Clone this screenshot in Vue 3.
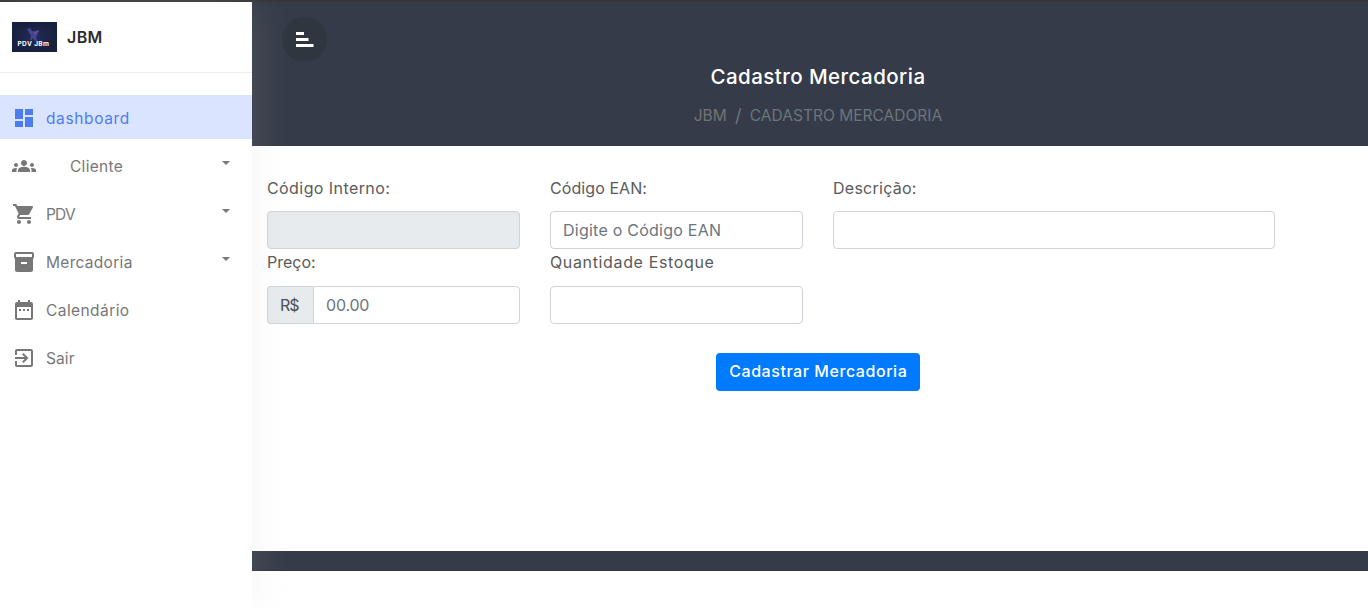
<script setup>
const menu = [
  { label: 'dashboard', cls: 'w-dashboard', active: true, icon: 'M3 13h8V3H3v10zm0 8h8v-6H3v6zm10 0h8V11h-8v10zm0-18v6h8V3h-8z' },
  { label: 'Cliente', cls: 'w-cliente', caret: true, icon: 'M12 12.75c1.63 0 3.07.39 4.24.9 1.08.48 1.76 1.56 1.76 2.73V18H6v-1.61c0-1.18.68-2.26 1.76-2.73 1.17-.52 2.61-.91 4.24-.91zM4 13c1.1 0 2-.9 2-2s-.9-2-2-2-2 .9-2 2 .9 2 2 2zm1.13 1.1C4.76 14.04 4.39 14 4 14c-.99 0-1.93.21-2.78.58C.48 14.9 0 15.62 0 16.43V18h4.5v-1.61c0-.83.23-1.61.63-2.29zM20 13c1.1 0 2-.9 2-2s-.9-2-2-2-2 .9-2 2 .9 2 2 2zm4 3.43c0-.81-.48-1.53-1.22-1.85-.85-.37-1.79-.58-2.78-.58-.39 0-.76.04-1.13.1.4.68.63 1.46.63 2.29V18H24v-1.57zM12 6c1.66 0 3 1.34 3 3s-1.34 3-3 3-3-1.34-3-3 1.34-3 3-3z' },
  { label: 'PDV', cls: 'w-pdv', caret: true, icon: 'M7 18c-1.1 0-1.99.9-1.99 2S5.9 22 7 22s2-.9 2-2-.9-2-2-2zM1 2v2h2l3.6 7.59-1.35 2.45c-.16.28-.25.61-.25.96 0 1.1.9 2 2 2h12v-2H7.42c-.14 0-.25-.11-.25-.25l.03-.12.9-1.63h7.45c.75 0 1.41-.41 1.75-1.03l3.58-6.49c.08-.14.12-.31.12-.48 0-.55-.45-1-1-1H5.21l-.94-2H1zm16 16c-1.1 0-1.99.9-1.99 2s.89 2 1.99 2 2-.9 2-2-.9-2-2-2z' },
  { label: 'Mercadoria', cls: 'w-mercadoria', caret: true, icon: 'M20 2H4c-1 0-2 .9-2 2v3.01c0 .72.43 1.34 1 1.69V20c0 1.1 1.1 2 2 2h14c.9 0 2-.9 2-2V8.7c.57-.35 1-.97 1-1.69V4c0-1.1-1-2-2-2zm-5 12H9v-2h6v2zm5-7H4V4l16-.02V7z' },
  { label: 'Calendário', cls: 'w-calendario', icon: 'M9 11H7v2h2v-2zm4 0h-2v2h2v-2zm4 0h-2v2h2v-2zm2-7h-1V2h-2v2H8V2H6v2H5c-1.11 0-1.99.9-1.99 2L3 20c0 1.1.89 2 2 2h14c1.1 0 2-.9 2-2V6c0-1.1-.9-2-2-2zm0 16H5V9h14v11z' },
  { label: 'Sair', cls: 'w-sair', icon: 'M10.09 15.59L11.5 17l5-5-5-5-1.41 1.41L12.67 11H3v2h9.67l-2.58 2.59zM19 3H5c-1.11 0-2 .9-2 2v4h2V5h14v14H5v-4H3v4c0 1.1.89 2 2 2h14c1.1 0 2-.9 2-2V5c0-1.1-.9-2-2-2z' },
]
</script>

<template>
  <div class="page">
    <aside class="sidebar">
      <div class="brand">
        <svg class="logo" width="45" height="30" viewBox="0 0 45 30">
          <defs>
            <radialGradient id="night"><stop offset="0" stop-color="#242c58" /><stop offset="1" stop-color="#17203f" /></radialGradient>
          </defs>
          <rect width="45" height="30" fill="url(#night)" />
          <path d="M15 7l3-1 2 3 3 .5 1-1 2 1-1 4-1 1 1 4-2 .5-2-3-2 2-1 .5 1-5-2-3z" fill="#47458f" />
          <path d="M22 10l2-.5 2-1.5 1 1.5-2 2-2 1z" fill="#6b4c94" />
          <text x="5.5" y="24" textLength="31.5" class="logo-text">PDV JBm</text>
        </svg>
        <span class="brand-name">JBM</span>
      </div>
      <nav class="menu">
        <a v-for="item in menu" :key="item.label" class="item" :class="{ active: item.active }">
          <svg width="24" height="24" viewBox="0 0 24 24" fill="currentColor"><path :d="item.icon" /></svg>
          <span class="label" :class="item.cls">{{ item.label }}</span>
          <svg v-if="item.caret" class="caret" width="8" height="4" viewBox="0 0 8 4"><path d="M0 0h8L4 4z" fill="currentColor" /></svg>
        </a>
      </nav>
    </aside>
    <main class="content">
      <header class="top">
        <button class="toggle">
          <svg width="18" height="15" viewBox="0 0 18 15" fill="#fff"><path d="M0 0h8v3H0zM0 6h12.5v3H0zM0 12h17.5v3H0z" /></svg>
        </button>
        <h1><span class="w-title">Cadastro Mercadoria</span></h1>
        <div class="crumbs"><span class="w-jbm">JBM</span><span class="slash">/</span><span class="w-crumb">CADASTRO MERCADORIA</span></div>
      </header>
      <form class="form">
        <div class="field"><label class="w-interno">Código Interno:</label><div class="input disabled"></div></div>
        <div class="field"><label class="w-ean">Código EAN:</label><div class="input"><span class="w-digite">Digite o Código EAN</span></div></div>
        <div class="field"><label class="w-desc">Descrição:</label><div class="input"></div></div>
        <div class="field second"><label class="w-preco">Preço:</label>
          <div class="group"><div class="addon"><span class="w-rs">R$</span></div><div class="input"><span class="w-zero">00.00</span></div></div>
        </div>
        <div class="field second"><label class="w-quant">Quantidade Estoque</label><div class="input"></div></div>
      </form>
      <div class="actions"><button class="submit"><span class="w-submit">Cadastrar Mercadoria</span></button></div>
      <footer class="bottom"></footer>
    </main>
  </div>
</template>

<style>
body { margin: 0; background: #fff; overflow: hidden; }
</style>

<style scoped>
* { box-sizing: border-box; }
.page { display: flex; height: 608px; border-top: 2px solid #363636; font-family: Inter, "Open Sans", sans-serif; font-size: 16px; color: #5a5a5a; white-space: nowrap; }
.sidebar { width: 252px; background: #fff; box-shadow: 0 0 40px rgba(200, 200, 200, .2); z-index: 1; }
.brand { display: flex; align-items: flex-start; height: 71px; padding: 20px 12px 0; border-bottom: 1px solid #eee; }
.logo-text { font: 700 6.5px Inter, sans-serif; fill: #fff; }
.brand-name { margin-left: 10px; font-weight: 600; line-height: 30px; letter-spacing: .4px; color: #2c2c2c; }
.menu { display: flex; flex-direction: column; gap: 4px; padding-top: 22px; }
.item { display: flex; align-items: center; height: 44px; padding: 2px 22px 0 12px; color: #777; font-size: 15.5px; }
.item.active { background: #dbe4ff; color: #4c7cf3; }
.label { margin-left: 10px; }
.label.w-cliente { margin-left: 34px; }
.caret { margin: -6px 0 0 auto; }
.w-dashboard { letter-spacing: .62px; }
.w-cliente { letter-spacing: .3px; }
.w-pdv { letter-spacing: -.8px; }
.w-mercadoria { letter-spacing: .3px; }
.w-calendario { letter-spacing: .43px; }
.w-sair { letter-spacing: .1px; }
.w-title { letter-spacing: .45px; }
.w-interno { letter-spacing: .42px; }
.w-ean { letter-spacing: .08px; }
.w-desc { letter-spacing: .26px; }
.w-preco { letter-spacing: 0; }
.w-quant { letter-spacing: .64px; }
.w-digite { letter-spacing: .24px; }
.w-rs { letter-spacing: -1px; }
.w-zero { letter-spacing: -.2px; }
.w-submit { margin-right: -.6px; letter-spacing: .56px; }
.w-jbm, .w-crumb { font-size: 15.5px; letter-spacing: .02px; }
.content { display: flex; flex-direction: column; flex: 1; }
.top { height: 144px; background: #353b48; padding: 15px 14px 0 30px; text-align: center; }
.toggle { display: flex; align-items: center; width: 45px; height: 45px; padding: 0 0 0 14px; border: 0; border-radius: 50%; background: #303640; }
h1 { margin: 0; font-size: 20.5px; font-weight: 500; line-height: 30px; color: #fff; }
.crumbs { display: flex; justify-content: center; margin-top: 12px; line-height: 24px; color: #6c757d; }
.crumbs .w-jbm { color: #747474; }
.slash { width: 23px; text-align: center; font-size: 18px; color: #6c757d; }
.form { display: grid; grid-template-columns: 253px 253px 442px; column-gap: 30px; padding: 30px 15px 0; }
.field { height: 74px; }
.field label { display: block; height: 35px; line-height: 25px; }
.field.second label { height: 36px; }
.input { display: flex; align-items: center; width: 100%; height: 38px; padding: 0 12px; border: 1px solid #ced4da; border-radius: 4px; background: #fff; color: #6c757d; }
.disabled { background: #e7ebee; }
.group { display: flex; }
.group .input { flex: 1; border-radius: 1px 4px 4px 1px; }
.addon { display: flex; align-items: center; width: 46px; height: 38px; padding-left: 12px; border: 1px solid #ced4da; border-right: 0; border-radius: 4px 0 0 4px; background: #e7ebee; color: #495057; }
.actions { display: flex; justify-content: center; margin-top: 29px; }
.submit { display: flex; align-items: center; justify-content: center; width: 204px; height: 38px; margin-left: 16px; padding: 0 0 2px; border: 0; border-radius: 4px; background: #007bff; color: #fff; font: 500 16px Inter, sans-serif; }
.bottom { height: 20px; margin-top: 160px; background: #353b48; border-bottom: 1px solid #2f3541; }
</style>
